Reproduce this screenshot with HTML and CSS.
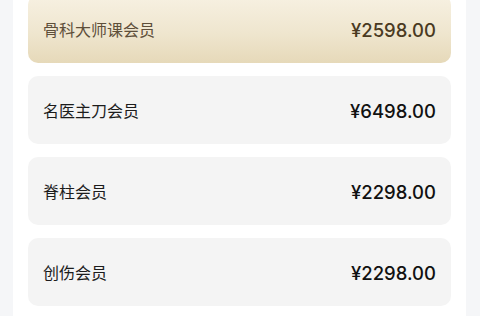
FILE: index.html
```html
<!DOCTYPE html>
<html lang="zh-CN">
<head>
<meta charset="utf-8">
<link rel="stylesheet" href="styles.css">
</head>
<body>
<div class="panel">
  <div class="list">
    <div class="card card-gold">
      <span class="name">骨科大师课会员</span>
      <span class="price">¥2598.00</span>
    </div>
    <div class="card">
      <span class="name">名医主刀会员</span>
      <span class="price">¥6498.00</span>
    </div>
    <div class="card">
      <span class="name">脊柱会员</span>
      <span class="price">¥2298.00</span>
    </div>
    <div class="card">
      <span class="name">创伤会员</span>
      <span class="price">¥2298.00</span>
    </div>
  </div>
</div>
</body>
</html>
```
FILE: styles.css
```css
html, body {
  margin: 0;
  padding: 0;
  background: #f5f6f8;
  width: 480px;
  height: 316px;
  overflow: hidden;
}
.panel {
  margin: 0 14px 0 13px;
  background: #ffffff;
  height: 316px;
  padding: 0 15px;
  box-sizing: border-box;
}
.list {
  display: flex;
  flex-direction: column;
  gap: 13px;
  transform: translateY(-5px);
}
.card {
  height: 68px;
  border-radius: 10px;
  background: #f4f4f4;
  display: flex;
  align-items: center;
  justify-content: space-between;
  padding: 0 15px;
  box-sizing: border-box;
}
.card-gold {
  background: linear-gradient(180deg, #f7f1e2 0%, #efe6cf 55%, #e6d9b9 100%);
}
.name {
  font-family: "Noto Sans CJK SC", "Noto Sans", sans-serif;
  font-size: 16px;
  color: #1c1c1c;
}
.price {
  font-family: "Inter", "Liberation Sans", sans-serif;
  font-size: 18.5px;
  font-weight: 500;
  color: #111111;
  padding-top: 2px;
}
.card-gold .name {
  color: #5e4f3a;
}
.card-gold .price {
  color: #4a3a22;
}
```
